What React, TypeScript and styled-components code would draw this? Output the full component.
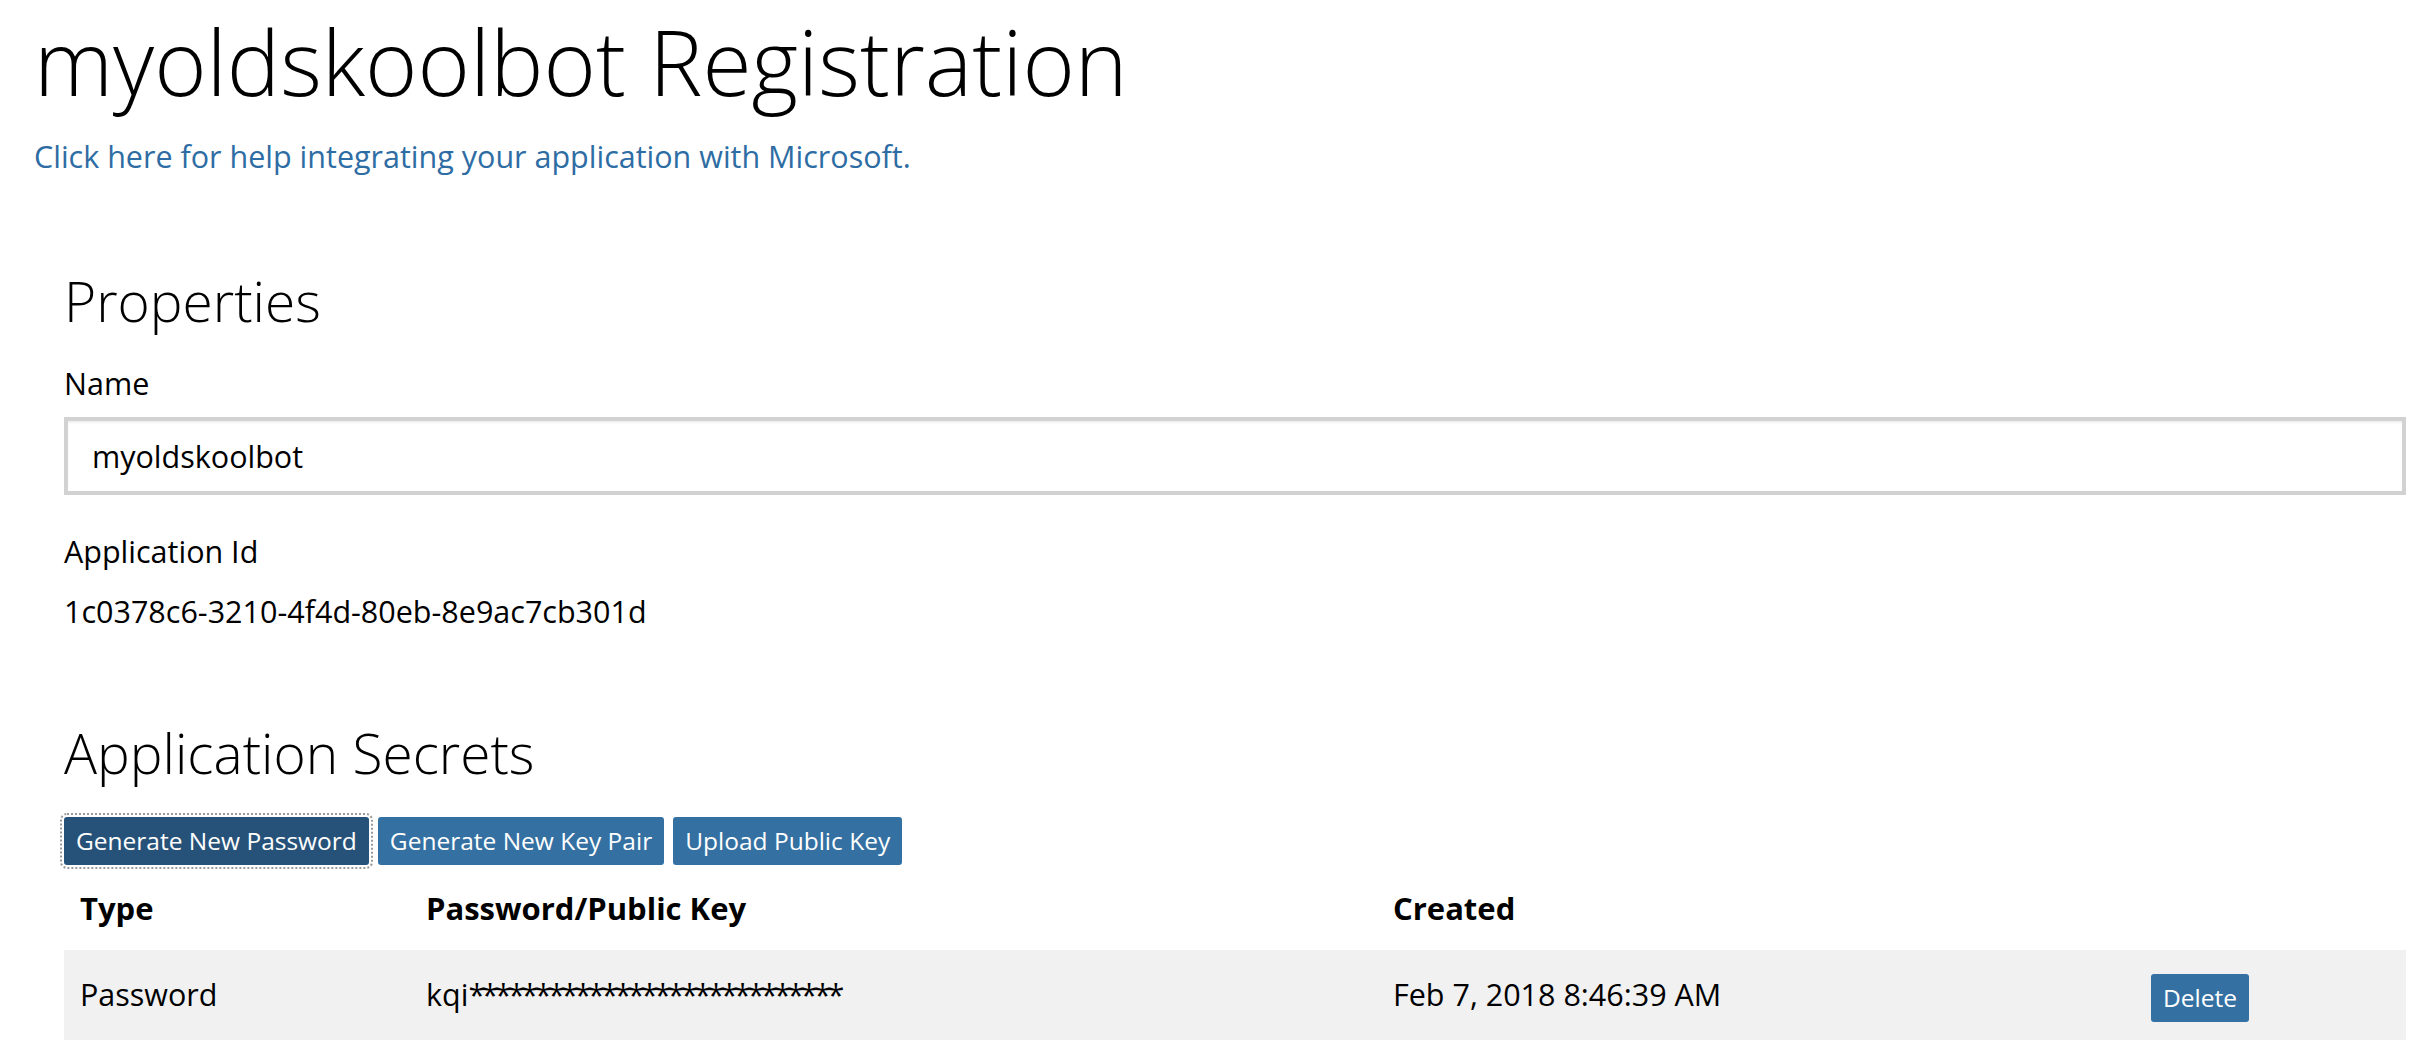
import styled, { createGlobalStyle } from "styled-components";

const GlobalStyle = createGlobalStyle`
  html, body {
    margin: 0;
    padding: 0;
    background: #ffffff;
  }
  body {
    font-family: "Open Sans", "Liberation Sans", sans-serif;
    color: #000000;
    font-size: 30.5px;
  }
`;

const Page = styled.div`
  padding: 0 20px 0 34px;
`;

const Title = styled.h1`
  margin: 0;
  font-size: 89.5px;
  font-weight: 300;
  line-height: 122px;
  white-space: nowrap;
`;

const HelpLink = styled.a`
  display: block;
  margin-top: 14px;
  font-size: 30.5px;
  line-height: 40px;
  color: #2e6da4;
  text-decoration: none;
`;

const Section = styled.section<{ $gap: number }>`
  margin-top: ${(p) => p.$gap}px;
  padding-left: 30px;
`;

const SectionTitle = styled.h2`
  margin: 0;
  font-size: 55px;
  font-weight: 300;
  line-height: 60px;
`;

const Label = styled.div<{ $gap: number }>`
  margin-top: ${(p) => p.$gap}px;
  line-height: 40px;
`;

const Value = styled.div`
  margin-top: 20px;
  line-height: 40px;
`;

const NameInput = styled.input`
  display: block;
  box-sizing: border-box;
  width: 100%;
  height: 78px;
  margin-top: 14px;
  padding: 0 24px;
  border: 4px solid #d2d2d2;
  box-shadow: inset 0 2px 2px rgba(0, 0, 0, 0.06);
  font-family: inherit;
  font-size: 30.5px;
  color: #000;
  outline: none;
`;

const ButtonRow = styled.div`
  display: flex;
  gap: 9px;
  margin-top: 34px;
`;

const Button = styled.button<{ $active?: boolean }>`
  height: 48px;
  padding: 0 12px;
  border: none;
  border-radius: 3px;
  background: ${(p) => (p.$active ? "#265279" : "#3470a1")};
  color: #ffffff;
  font-family: inherit;
  font-size: 24.5px;
  line-height: 40px;
  cursor: pointer;
  outline: ${(p) => (p.$active ? "2px dotted #9a9a9a" : "none")};
  outline-offset: 2px;
`;

const Table = styled.table`
  width: 100%;
  border-collapse: collapse;
  table-layout: fixed;
`;

const HeadCell = styled.th<{ $w?: number }>`
  box-sizing: border-box;
  width: ${(p) => (p.$w ? `${p.$w}px` : "auto")};
  padding: 23px 16px 22px;
  text-align: left;
  font-size: 31px;
  font-weight: 700;
  line-height: 40px;
`;

const Row = styled.tr`
  background: #f1f1f1;
`;

const Cell = styled.td`
  padding: 24px 16px;
  line-height: 40px;
  vertical-align: top;
  white-space: nowrap;
`;

const Mask = styled.span`
  letter-spacing: -3.5px;
`;

const secrets = [
  {
    type: "Password",
    prefix: "kqi",
    hidden: 28,
    created: "Feb 7, 2018 8:46:39 AM",
  },
];

export default function App() {
  return (
    <Page>
      <GlobalStyle />
      <Title>myoldskoolbot Registration</Title>
      <HelpLink href="#">
        Click here for help integrating your application with Microsoft.
      </HelpLink>

      <Section $gap={95}>
        <SectionTitle>Properties</SectionTitle>
        <Label $gap={32}>Name</Label>
        <NameInput defaultValue="myoldskoolbot" />
        <Label $gap={36}>Application Id</Label>
        <Value>1c0378c6-3210-4f4d-80eb-8e9ac7cb301d</Value>
      </Section>

      <Section $gap={92}>
        <SectionTitle>Application Secrets</SectionTitle>
        <ButtonRow>
          <Button $active>Generate New Password</Button>
          <Button>Generate New Key Pair</Button>
          <Button>Upload Public Key</Button>
        </ButtonRow>
        <Table>
          <thead>
            <tr>
              <HeadCell $w={346}>Type</HeadCell>
              <HeadCell $w={967}>Password/Public Key</HeadCell>
              <HeadCell $w={758}>Created</HeadCell>
              <HeadCell />
            </tr>
          </thead>
          <tbody>
            {secrets.map((s) => (
              <Row key={s.prefix}>
                <Cell>{s.type}</Cell>
                <Cell>
                  {s.prefix}
                  <Mask>{"*".repeat(s.hidden)}</Mask>
                </Cell>
                <Cell>{s.created}</Cell>
                <Cell>
                  <Button>Delete</Button>
                </Cell>
              </Row>
            ))}
          </tbody>
        </Table>
      </Section>
    </Page>
  );
}
